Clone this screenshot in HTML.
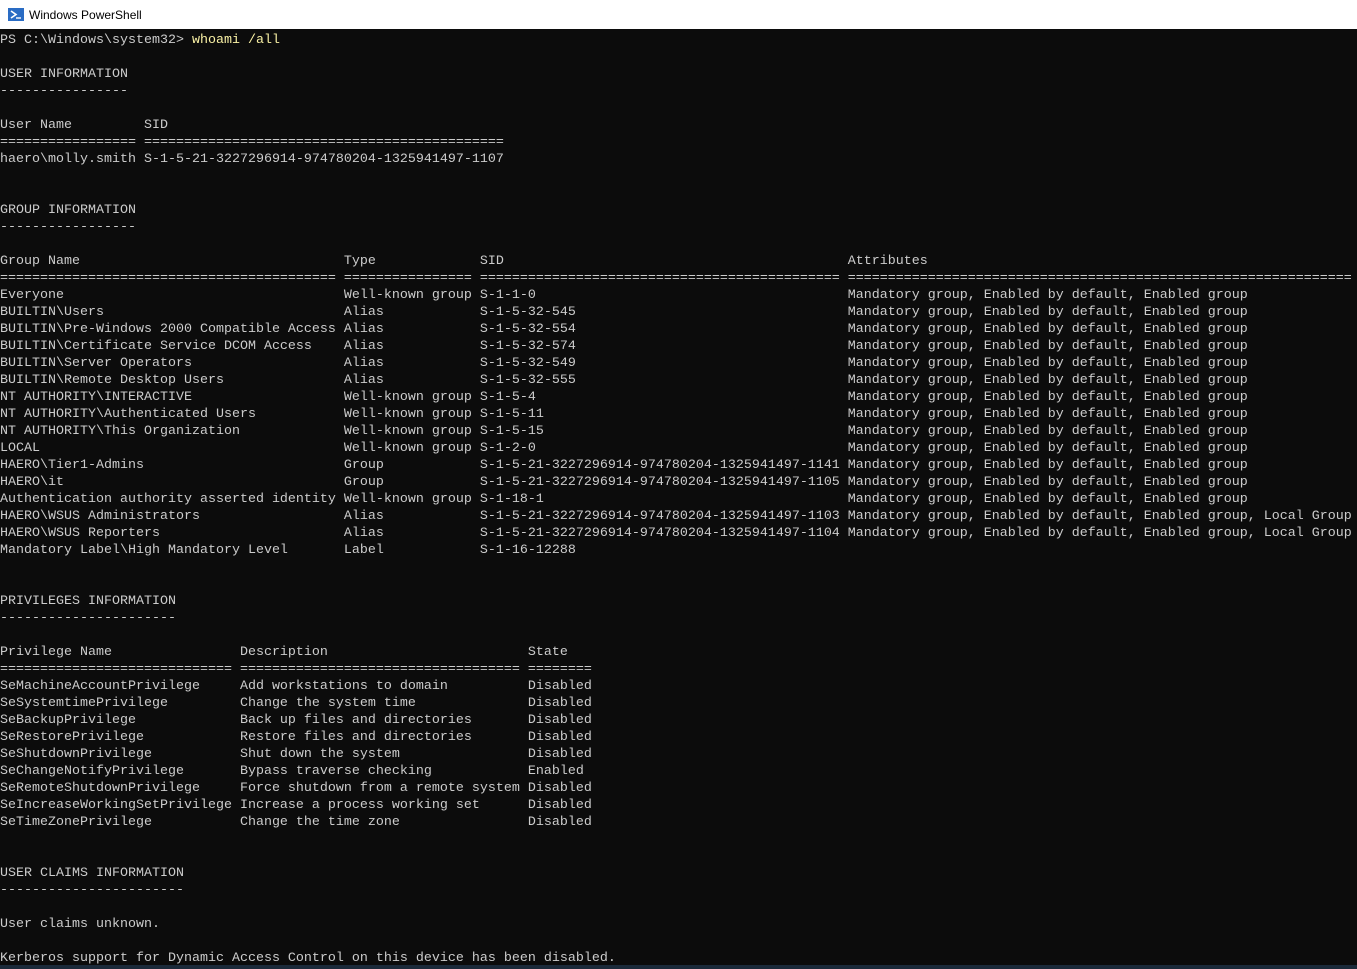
<!DOCTYPE html>
<html><head><meta charset="utf-8"><style>
html,body{margin:0;padding:0;width:1357px;height:969px;overflow:hidden;background:#0c0c0c}
.t{position:absolute;left:0;top:0;width:1357px;height:29px;background:#fff;font:12px "Liberation Sans",sans-serif;color:#000}
.t span{position:absolute;left:29px;top:8px}
.ic{position:absolute;left:8px;top:8px;width:16px;height:13px;background:#2a6cc4}
pre{position:absolute;left:0;top:32px;margin:0;font:13.33px/17px "Liberation Mono",monospace;color:#cccccc;white-space:pre}
.y{color:#f9f1a5}
.b{position:absolute;left:0;top:965px;width:1357px;height:4px;background:#1b2a3a}
</style></head><body>
<div class="t"><div class="ic"><svg width="16" height="13"><path d="M3 3l5 3.5-5 3.5" stroke="#fff" stroke-width="1.6" fill="none"/><path d="M8 10h5" stroke="#fff" stroke-width="1.4"/></svg></div><span>Windows PowerShell</span></div>
<pre>PS C:\Windows\system32&gt; <span class="y">whoami /all</span>

USER INFORMATION
----------------

User Name         SID
================= =============================================
haero\molly.smith S-1-5-21-3227296914-974780204-1325941497-1107


GROUP INFORMATION
-----------------

Group Name                                 Type             SID                                           Attributes
========================================== ================ ============================================= ===============================================================
Everyone                                   Well-known group S-1-1-0                                       Mandatory group, Enabled by default, Enabled group
BUILTIN\Users                              Alias            S-1-5-32-545                                  Mandatory group, Enabled by default, Enabled group
BUILTIN\Pre-Windows 2000 Compatible Access Alias            S-1-5-32-554                                  Mandatory group, Enabled by default, Enabled group
BUILTIN\Certificate Service DCOM Access    Alias            S-1-5-32-574                                  Mandatory group, Enabled by default, Enabled group
BUILTIN\Server Operators                   Alias            S-1-5-32-549                                  Mandatory group, Enabled by default, Enabled group
BUILTIN\Remote Desktop Users               Alias            S-1-5-32-555                                  Mandatory group, Enabled by default, Enabled group
NT AUTHORITY\INTERACTIVE                   Well-known group S-1-5-4                                       Mandatory group, Enabled by default, Enabled group
NT AUTHORITY\Authenticated Users           Well-known group S-1-5-11                                      Mandatory group, Enabled by default, Enabled group
NT AUTHORITY\This Organization             Well-known group S-1-5-15                                      Mandatory group, Enabled by default, Enabled group
LOCAL                                      Well-known group S-1-2-0                                       Mandatory group, Enabled by default, Enabled group
HAERO\Tier1-Admins                         Group            S-1-5-21-3227296914-974780204-1325941497-1141 Mandatory group, Enabled by default, Enabled group
HAERO\it                                   Group            S-1-5-21-3227296914-974780204-1325941497-1105 Mandatory group, Enabled by default, Enabled group
Authentication authority asserted identity Well-known group S-1-18-1                                      Mandatory group, Enabled by default, Enabled group
HAERO\WSUS Administrators                  Alias            S-1-5-21-3227296914-974780204-1325941497-1103 Mandatory group, Enabled by default, Enabled group, Local Group
HAERO\WSUS Reporters                       Alias            S-1-5-21-3227296914-974780204-1325941497-1104 Mandatory group, Enabled by default, Enabled group, Local Group
Mandatory Label\High Mandatory Level       Label            S-1-16-12288


PRIVILEGES INFORMATION
----------------------

Privilege Name                Description                         State
============================= =================================== ========
SeMachineAccountPrivilege     Add workstations to domain          Disabled
SeSystemtimePrivilege         Change the system time              Disabled
SeBackupPrivilege             Back up files and directories       Disabled
SeRestorePrivilege            Restore files and directories       Disabled
SeShutdownPrivilege           Shut down the system                Disabled
SeChangeNotifyPrivilege       Bypass traverse checking            Enabled
SeRemoteShutdownPrivilege     Force shutdown from a remote system Disabled
SeIncreaseWorkingSetPrivilege Increase a process working set      Disabled
SeTimeZonePrivilege           Change the time zone                Disabled


USER CLAIMS INFORMATION
-----------------------

User claims unknown.

Kerberos support for Dynamic Access Control on this device has been disabled.</pre>
<div class="b"></div>
</body></html>
